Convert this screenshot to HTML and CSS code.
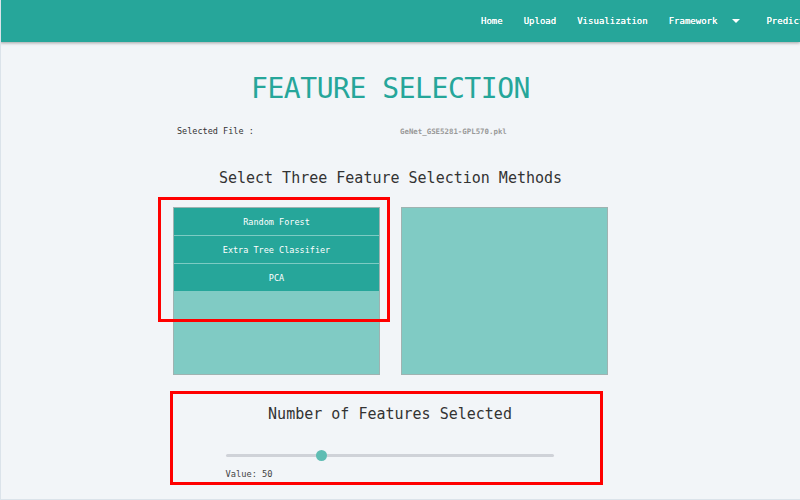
FILE: index.html
```html
<!DOCTYPE html>
<html>
<head>
<meta charset="utf-8">
<link rel="stylesheet" href="styles.css">
</head>
<body>
<div class="frame">
  <nav class="navbar">
    <ul class="nav-links">
      <li>Home</li>
      <li>Upload</li>
      <li>Visualization</li>
      <li class="dropdown">Framework <span class="caret"></span></li>
      <li>Prediction</li>
    </ul>
  </nav>
  <main class="main">
    <h1 class="title">FEATURE SELECTION</h1>
    <div class="file-row">
      <span class="file-label">Selected File :</span>
      <span class="file-name">GeNet_GSE5281-GPL570.pkl</span>
    </div>
    <h2 class="heading">Select Three Feature Selection Methods</h2>
    <div class="boxes">
      <div class="box">
        <div class="method">Random Forest</div>
        <div class="method">Extra Tree Classifier</div>
        <div class="method">PCA</div>
      </div>
      <div class="box"></div>
      <div class="highlight"></div>
    </div>
    <section class="features">
      <h2 class="heading">Number of Features Selected</h2>
      <div class="slider-wrap">
        <input class="slider" type="range" min="0" max="175" value="50">
        <div class="value">Value: 50</div>
      </div>
    </section>
  </main>
</div>
</body>
</html>
```

FILE: styles.css
```css
* { box-sizing: border-box; }
html, body { margin: 0; padding: 0; }
body {
  background: #f2f5f8;
  font-family: "DejaVu Sans Mono", "Liberation Mono", monospace;
  color: #333;
}
.frame {
  width: 800px;
  height: 500px;
  overflow: hidden;
  border-left: 1px solid #dbe3ea;
  border-bottom: 1px solid #dbe3ea;
}
.navbar {
  height: 42px;
  margin-left: -1px;
  background: #26a69a;
  box-shadow: 0 1px 3px rgba(0,0,0,0.35);
  position: relative;
  z-index: 2;
  overflow: hidden;
}
.nav-links {
  list-style: none;
  margin: 0;
  padding: 0 0 0 470.5px;
  display: flex;
  align-items: center;
  height: 42px;
  white-space: nowrap;
}
.nav-links li {
  color: #fff;
  font-size: 9px;
  padding: 0 10.5px;
  display: flex;
  align-items: center;
  text-shadow: 0 0 0.2px #fff;
}
.caret {
  display: inline-block;
  width: 0; height: 0;
  border-left: 4px solid transparent;
  border-right: 4px solid transparent;
  border-top: 4px solid #fff;
  margin-left: 15px;
  margin-right: 5px;
}
.main {
  width: 779px;
  display: flex;
  flex-direction: column;
  align-items: center;
}
.title {
  margin: 30px 0 0 0;
  font-size: 28px;
  line-height: 34px;
  letter-spacing: -0.45px;
  font-weight: normal;
  color: #26a69a;
}
.file-row {
  margin-top: 19px;
  width: 440px;
  display: flex;
  align-items: center;
  height: 12px;
  margin-left: 13px;
}
.file-label {
  font-size: 8.5px;
  color: #333;
  width: 223px;
}
.file-name {
  font-size: 7.4px;
  color: #999;
  font-weight: bold;
}
.heading {
  margin: 31px 0 0 0;
  font-size: 15px;
  line-height: 20px;
  font-weight: normal;
  color: #333;
}
.boxes {
  position: relative;
  margin-top: 19px;
  display: flex;
  gap: 21px;
}
.box {
  width: 207px;
  height: 168px;
  background: #80cbc4;
  border: 1px solid #9fb3b1;
}
.method {
  height: 28px;
  background: #26a69a;
  color: #fff;
  font-size: 8.5px;
  display: flex;
  align-items: center;
  justify-content: center;
  border-bottom: 1px solid #7ccbc3;
}
.method:last-child { border-bottom: none; height: 27px; }
.highlight {
  position: absolute;
  left: -15px;
  top: -10px;
  width: 232px;
  height: 125px;
  border: 3px solid #ff0000;
}
.features {
  margin-top: 16px;
  width: 433px;
  height: 94px;
  border: 3px solid #ff0000;
  margin-left: -9px;
  display: flex;
  flex-direction: column;
  align-items: center;
}
.features .heading { margin-top: 10px; margin-left: 8px; }
.slider-wrap {
  width: 328px;
  margin-top: 26px;
  margin-left: 7px;
}
.slider {
  -webkit-appearance: none;
  appearance: none;
  width: 328px;
  height: 10px;
  margin: 0;
  background: transparent;
  display: block;
}
.slider::-webkit-slider-runnable-track {
  height: 3px;
  background: #cfd2d8;
  border-radius: 2px;
}
.slider::-webkit-slider-thumb {
  -webkit-appearance: none;
  width: 11px;
  height: 11px;
  border-radius: 50%;
  background: #5fbdb3;
  margin-top: -4px;
  border: none;
}
.value {
  margin-top: 9px;
  font-size: 8.7px;
  color: #444;
}
```
